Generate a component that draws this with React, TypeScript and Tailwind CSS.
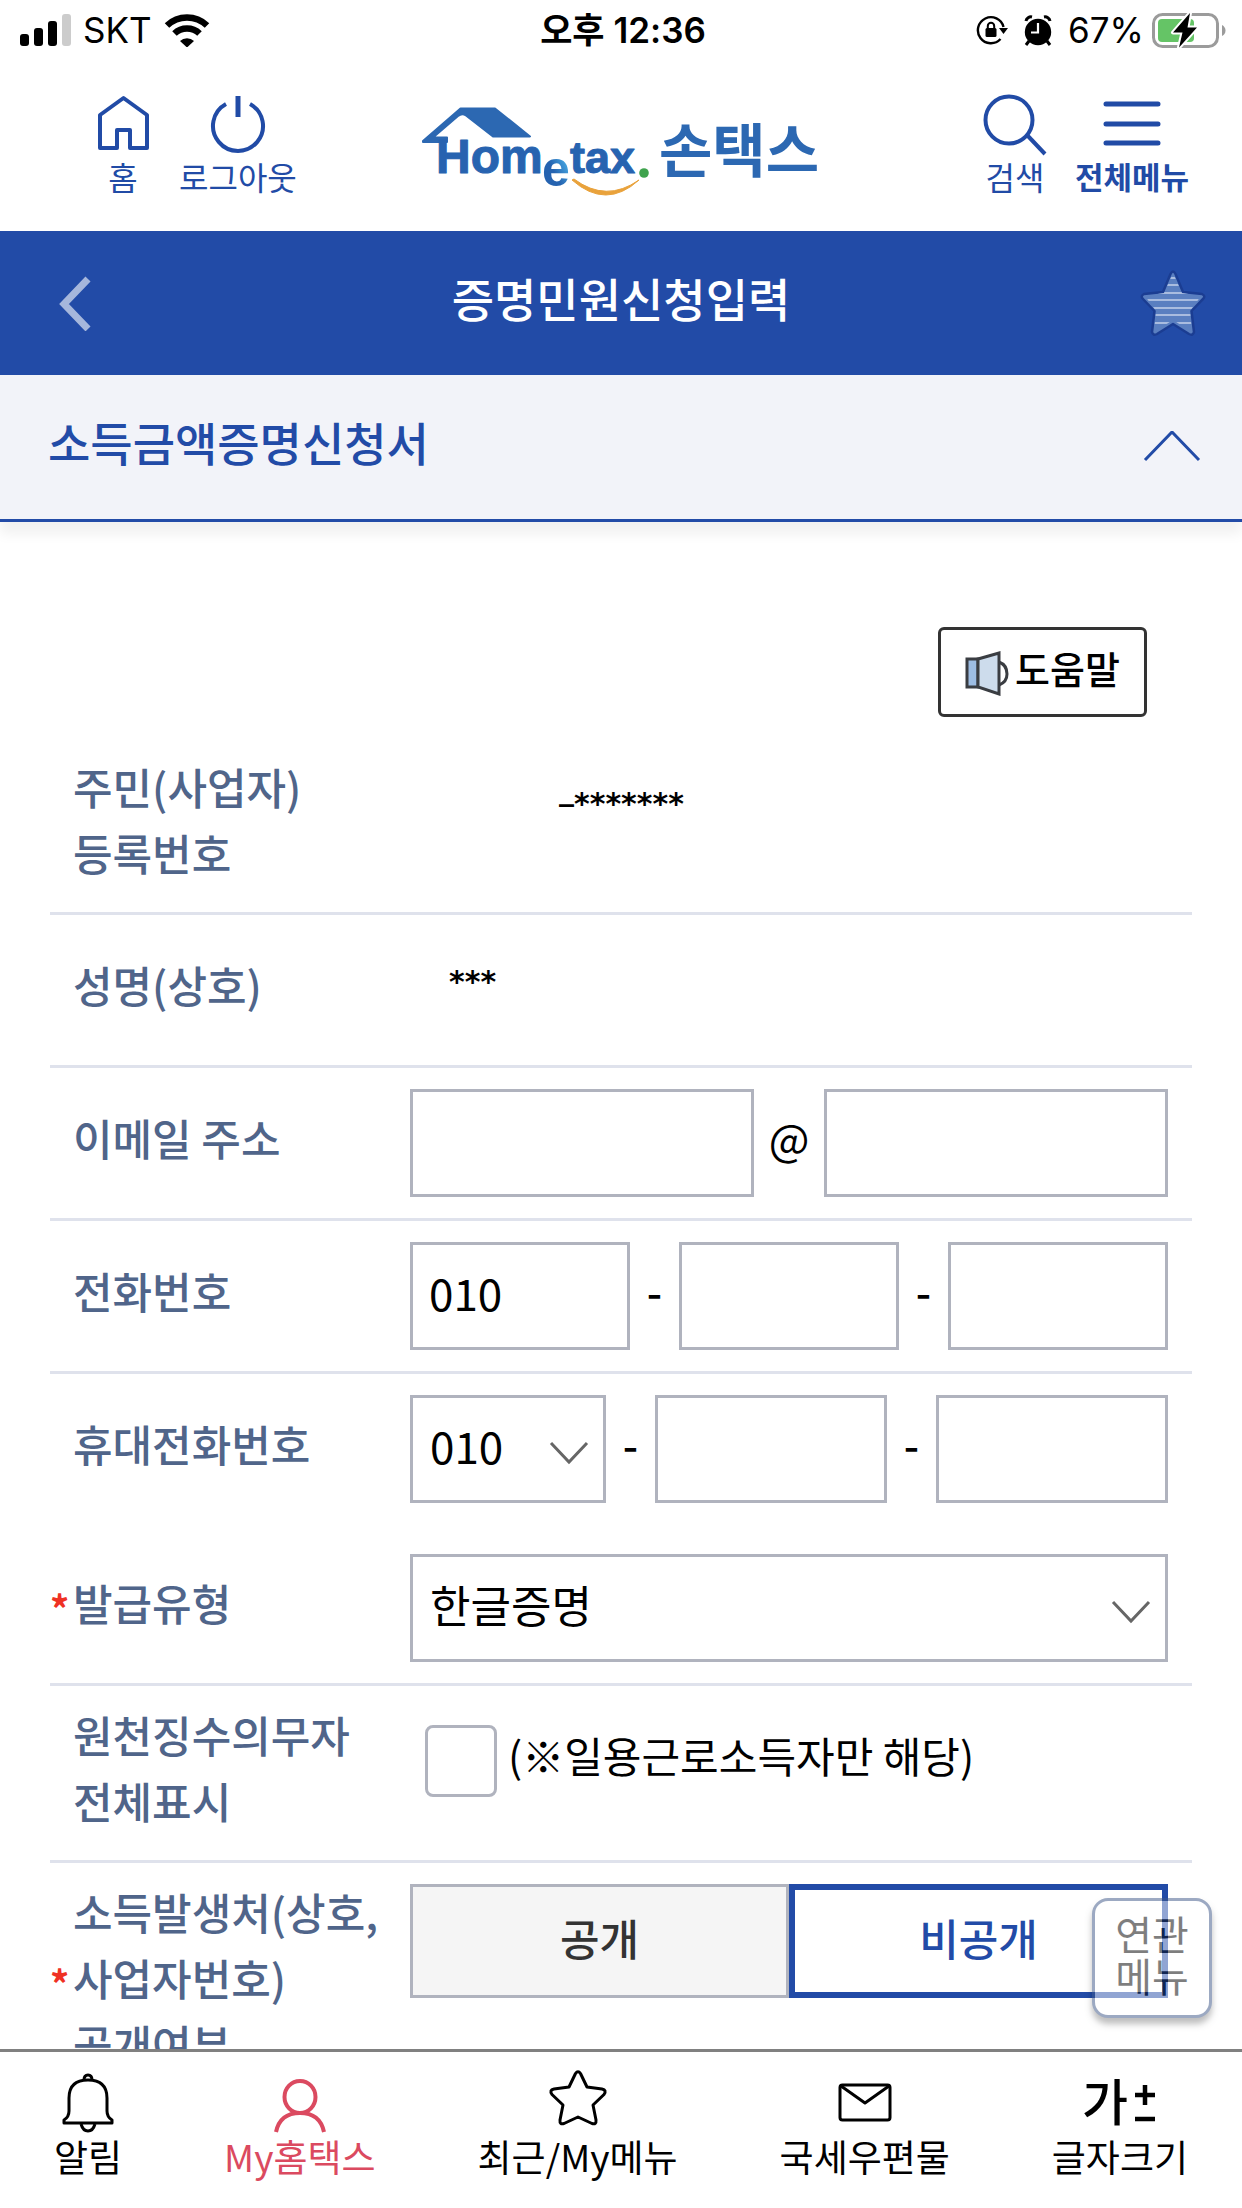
import { useState, type ReactNode } from "react"

const inputClass =
    "h-[108px] min-w-0 flex-1 border-[3px] border-[#b0b3be] bg-white px-4 pb-2 text-[44px] text-black outline-none"

function StatusBar() {
    return (
        <div className="grid h-[60px] shrink-0 grid-cols-[1fr_auto_1fr] items-center pr-4 pl-5 font-['Inter','Noto_Sans_CJK_KR',sans-serif] text-[35px] leading-[40px] text-black">
            <div className="flex items-center gap-3">
                <svg className="h-8 w-[51px]" viewBox="0 0 51 32" aria-hidden="true">
                    <rect x="0" y="20" width="9" height="12" rx="3" />
                    <rect x="14" y="14" width="9" height="18" rx="3" />
                    <rect x="28" y="7" width="9" height="25" rx="3" />
                    <rect x="42" y="0" width="9" height="32" rx="3" fill="#ccc" />
                </svg>
                <span>SKT</span>
                <svg className="h-[33px] w-[46px]" viewBox="0 0 46 33" aria-hidden="true">
                    <path d="M3 11.500A29 29 0 0 1 43 11.500" fill="none" stroke="#000" strokeWidth="6.500" />
                    <path d="M10.500 19.500A18 18 0 0 1 35.500 19.500" fill="none" stroke="#000" strokeWidth="6.500" />
                    <path d="M16 27A10 10 0 0 1 30 27L23 33.500Z" />
                </svg>
            </div>
            <span className="font-semibold">오후 12:36</span>
            <div className="flex items-center justify-end">
                {/* Rotation lock */}
                <svg className="mr-4 h-8 w-8" viewBox="0 0 32 32" aria-hidden="true">
                    <path d="M24.500 25A13 13 0 1 1 27.500 13" fill="none" stroke="#000" strokeWidth="2.400" />
                    <path d="M23 14H32L27.500 20Z" />
                    <rect x="9.500" y="14" width="11" height="9" rx="1.500" />
                    <path d="M11.800 15V12A3.200 3.200 0 0 1 18.200 12V15" fill="none" stroke="#000" strokeWidth="2" />
                </svg>
                {/* Alarm */}
                <svg className="mr-4 h-8 w-7" viewBox="0 0 28 32" aria-hidden="true">
                    <circle cx="14" cy="18" r="13.200" />
                    <path d="M2 7A5 5 0 0 1 8 3M26 7A5 5 0 0 0 20 3" fill="none" stroke="#000" strokeWidth="3" />
                    <path d="M5 27L2 31M23 27L26 31" stroke="#000" strokeWidth="3" />
                    <path d="M14 9V18.500H7" fill="none" stroke="#fff" strokeWidth="2.200" />
                </svg>
                <span className="mr-2">67%</span>
                <svg className="h-9 w-[74px]" viewBox="0 0 74 36" aria-hidden="true">
                    <rect x="1.500" y="2.500" width="64" height="32" rx="9" fill="none" stroke="#9b9b9b" strokeWidth="3" />
                    <path d="M70 13Q73.500 15 73.500 18.500Q73.500 22 70 24Z" fill="#9b9b9b" />
                    <rect x="6" y="7" width="36" height="23" rx="4" fill="#65c466" />
                    <path
                        d="M38 1L21 20.500H30.500L27 35.500L45 15.500H35.500Z"
                        stroke="#fff"
                        strokeWidth="4"
                        strokeLinejoin="round"
                        paintOrder="stroke"
                    />
                </svg>
            </div>
        </div>
    )
}

function Logo() {
    return (
        <svg className="h-[92px] w-[400px]" viewBox="0 0 400 92" role="img" aria-label="Hometax 손택스">
            <defs>
                <linearGradient id="logo-e" x1="1" y1="0" x2="0.200" y2="0.800">
                    <stop offset="0.200" stopColor="#4fb8ee" />
                    <stop offset="0.700" stopColor="#2563b0" />
                </linearGradient>
            </defs>
            <path
                d="M2 35L39.500 2.500H74L109 30.500H72L45 9.500Q41 6.500 37 10L12 31.500H26V36H2Z"
                fill="#2c68b2"
                stroke="#2c68b2"
                strokeWidth="2"
                strokeLinejoin="round"
            />
            <g fill="#2763b0" stroke="#2763b0" strokeLinejoin="round" className="font-['Liberation_Sans',sans-serif] font-bold">
                <text x="15" y="67" fontSize="48" strokeWidth="1">Hom</text>
                <text x="149" y="67" fontSize="45" strokeWidth="1">tax</text>
            </g>
            <text x="121" y="80" fontSize="50" fill="url(#logo-e)" className="font-['Liberation_Sans',sans-serif] font-bold">e</text>
            <circle cx="223" cy="67" r="4.800" fill="#3fa34d" />
            <path d="M151 74Q185 104 218 74Q185 97 153 73Z" fill="#e9a23b" stroke="#e9a23b" strokeWidth="1" />
            <text x="238" y="66" fontSize="58" fill="#2c68b2" className="font-['Noto_Sans_CJK_KR',sans-serif] font-bold">손택스</text>
        </svg>
    )
}

interface IconButtonProps {
    label: string
    bold?: boolean
    children: ReactNode
}

function HeaderButton({ label, bold, children }: IconButtonProps) {
    return (
        <button type="button" className="flex flex-col items-center text-[#214ba6]">
            <svg
                className="h-16 w-16"
                viewBox="0 0 64 64"
                fill="none"
                stroke="currentColor"
                strokeWidth="4"
                strokeLinejoin="round"
                aria-hidden="true"
            >
                {children}
            </svg>
            <span className={bold ? "text-[31px] leading-9 font-bold" : "text-[32px] leading-9"}>{label}</span>
        </button>
    )
}

function Header() {
    return (
        <header className="grid h-[171px] shrink-0 grid-cols-[1fr_auto_1fr] items-start px-[53px] pt-[34px]">
            <div className="flex gap-6 pl-[38px]">
                <HeaderButton label="홈">
                    <path d="M9 21L32.500 4L56 21V54H39V36H26V54H9Z" />
                </HeaderButton>
                <HeaderButton label="로그아웃">
                    <path d="M20 10A25 25 0 1 0 44 10" />
                    <path d="M32 2V23" strokeWidth="5" />
                </HeaderButton>
            </div>
            <div className="pt-3">
                <Logo />
            </div>
            <div className="flex justify-end gap-7">
                <HeaderButton label="검색">
                    <circle cx="26" cy="26" r="23.500" />
                    <path d="M44 41L62 60" />
                </HeaderButton>
                <HeaderButton label="전체메뉴" bold>
                    <path d="M6 10H58M6 30H58M6 49H58" strokeWidth="5" strokeLinecap="round" />
                </HeaderButton>
            </div>
        </header>
    )
}

function TitleBar() {
    return (
        <div className="flex h-36 shrink-0 items-center justify-between bg-[#224ba7] pr-[35px] pl-[57px]">
            <button type="button" aria-label="이전" className="w-[46px]">
                <svg className="h-14 w-9" viewBox="0 0 36 56" fill="none" stroke="#a6b7dc" strokeWidth="7" aria-hidden="true">
                    <path d="M31 4L7 29L31 54" />
                </svg>
            </button>
            <h1 className="pb-3 text-[46px] leading-[66px] font-medium text-white">증명민원신청입력</h1>
            <button type="button" aria-label="즐겨찾기">
                <svg className="h-[70px] w-[68px]" viewBox="0 0 68 70" aria-hidden="true">
                    <defs>
                        <clipPath id="fav-star">
                            <path d="M34 5L43 25L62 28L51 43L53 64L34 52L15 64L17 43L6 28L25 25Z" />
                        </clipPath>
                    </defs>
                    <path
                        d="M31.500 6Q34 1 36.500 6L44 24L63 26Q67 28 64 31L52.500 43L55 64Q54 68 50 66L34 56L18 66Q14 68 13 64L15.500 43L4 31Q1 28 5 26L24 24Z"
                        fill="#5a7fc0"
                        stroke="#1b3d92"
                        strokeWidth="2.500"
                        strokeLinejoin="round"
                    />
                    <path
                        d="M4 10H64M4 17H64M4 25H64M4 32H64M4 40H64M4 47H64M4 55H64"
                        stroke="#a9bcdf"
                        strokeWidth="1.800"
                        clipPath="url(#fav-star)"
                    />
                </svg>
            </button>
        </div>
    )
}

interface FieldRowProps {
    label: ReactNode
    htmlFor?: string
    required?: boolean
    className?: string
    children: ReactNode
}

function FieldRow({ label, htmlFor, required, className = "border-b-[3px]", children }: FieldRowProps) {
    return (
        <div className={`grid grid-cols-[360px_minmax(0,1fr)] items-center border-[#dfe2ec] py-[21px] pr-6 ${className}`}>
            <div className="-mt-1.5 mb-1.5 flex items-center text-[43px] leading-[66px] font-medium text-[#50658a]">
                <span className="w-[23px] shrink-0 pt-3 text-[38px] font-bold text-[#ef3124]">{required ? "*" : ""}</span>
                <label htmlFor={htmlFor} className="whitespace-nowrap">{label}</label>
            </div>
            {children}
        </div>
    )
}

function SelectBox({ id, options, className }: { id: string; options: string[]; className: string }) {
    return (
        <div className={`relative ${className}`}>
            <select
                id={id}
                className="h-[108px] w-full appearance-none border-[3px] border-[#b0b3be] bg-white px-[17px] pb-2 text-[44px] text-black"
            >
                {options.map((option) => (
                    <option key={option}>{option}</option>
                ))}
            </select>
            <svg
                className="pointer-events-none absolute top-[46px] right-[17px] h-6 w-10"
                viewBox="0 0 40 24"
                fill="none"
                stroke="#666"
                strokeWidth="3"
                aria-hidden="true"
            >
                <path d="M2 2L20 21L38 2" />
            </svg>
        </div>
    )
}

function Dash() {
    return <span className="w-[49px] shrink-0 pb-3 text-center text-[43px] leading-[66px] font-medium">-</span>
}

function RequestForm() {
    const [open, setOpen] = useState(false)

    return (
        <form className="mx-[50px]">
            <div className="flex justify-end pt-[105px] pr-[45px]">
                <button
                    type="button"
                    className="flex h-[90px] items-center gap-1.5 rounded-md border-[3px] border-[#333] px-6 text-[38px] leading-[66px] font-medium text-black"
                >
                    <svg className="h-12 w-[44px]" viewBox="0 0 44 48" stroke="#3a3d42" strokeWidth="3" aria-hidden="true">
                        <path d="M34 14Q42 17 42 26Q42 34 34 37" fill="none" />
                        <path d="M2 11H13V39H2Z" fill="#9dbde3" />
                        <path d="M13 11L34 5V46L13 39Z" fill="#cddcec" />
                    </svg>
                    <span className="pb-2">도움말</span>
                </button>
            </div>

            <div className="pt-[21px]">
                <FieldRow label={<>주민(사업자)<br />등록번호</>}>
                    <div className="flex items-start self-start pt-3 pl-[149px] font-['DejaVu_Sans',sans-serif] text-[30px] font-bold text-black">
                        <span className="leading-[38px]">_</span>
                        <span className="leading-[66px]">*******</span>
                    </div>
                </FieldRow>
                <FieldRow label="성명(상호)" className="min-h-[153px] border-b-[3px]">
                    <span className="pb-4 pl-[39px] font-['DejaVu_Sans',sans-serif] text-[30px] leading-[66px] font-bold text-black">
                        ***
                    </span>
                </FieldRow>
                <FieldRow label="이메일 주소" htmlFor="email">
                    <div className="flex items-center">
                        <input id="email" className={inputClass} />
                        <span className="w-[70px] shrink-0 pb-3 text-center text-[43px] leading-[66px]">@</span>
                        <input aria-label="이메일 도메인" className={inputClass} />
                    </div>
                </FieldRow>
                <FieldRow label="전화번호" htmlFor="phone">
                    <div className="flex items-center">
                        <input id="phone" defaultValue="010" className={inputClass} />
                        <Dash />
                        <input aria-label="전화번호 가운데 자리" className={inputClass} />
                        <Dash />
                        <input aria-label="전화번호 끝자리" className={inputClass} />
                    </div>
                </FieldRow>
                <FieldRow label="휴대전화번호" htmlFor="mobile" className="mb-[9px]">
                    <div className="flex items-center">
                        <SelectBox id="mobile" options={["010", "011", "016"]} className="w-[196px] shrink-0" />
                        <Dash />
                        <input aria-label="휴대전화번호 가운데 자리" className={inputClass} />
                        <Dash />
                        <input aria-label="휴대전화번호 끝자리" className={inputClass} />
                    </div>
                </FieldRow>
                <FieldRow label="발급유형" htmlFor="issue-type" required>
                    <SelectBox id="issue-type" options={["한글증명", "영문증명"]} className="w-full" />
                </FieldRow>
                <FieldRow label={<>원천징수의무자<br />전체표시</>} htmlFor="withholding">
                    <div className="flex items-center gap-[11px] self-start pt-[18px] pl-[15px]">
                        <input
                            id="withholding"
                            type="checkbox"
                            className="size-[72px] shrink-0 appearance-none rounded-lg border-[3px] border-[#b0b3be] bg-white checked:bg-[#224ba7]"
                        />
                        <label htmlFor="withholding" className="-mt-3 text-[42px] leading-[66px] whitespace-nowrap text-black">
                            (※일용근로소득자만 해당)
                        </label>
                    </div>
                </FieldRow>
                <FieldRow label={<>소득발생처(상호,<br />사업자번호)<br />공개여부</>} required>
                    <div className="grid h-[114px] grid-cols-2 self-start text-[43px] leading-[66px] font-medium">
                        {[true, false].map((value) => (
                            <button
                                key={String(value)}
                                type="button"
                                aria-pressed={open === value}
                                onClick={() => setOpen(value)}
                                className={
                                    open === value
                                        ? "border-[6px] border-[#224ba7] bg-white pb-2 text-[#224ba7]"
                                        : "border-[3px] border-[#b0b3be] bg-[#f5f5f5] pb-2 text-[#333]"
                                }
                            >
                                {value ? "공개" : "비공개"}
                            </button>
                        ))}
                    </div>
                </FieldRow>
            </div>
        </form>
    )
}

function NavItem({ label, active, children }: { label: string; active?: boolean; children: ReactNode }) {
    return (
        <a href="#" className={active ? "flex flex-col items-center text-[#db4a60]" : "flex flex-col items-center text-black"}>
            <svg
                className="h-16 w-16 overflow-visible"
                viewBox="6 0 64 64"
                fill="none"
                stroke="currentColor"
                strokeWidth="3"
                strokeLinejoin="round"
                aria-hidden="true"
            >
                {children}
            </svg>
            <span className="text-[37px] leading-[44px]">{label}</span>
        </a>
    )
}

function BottomNav() {
    return (
        <nav className="flex shrink-0 items-start justify-between border-t-[3px] border-[#808080] bg-white px-[54px] pt-[18px] pb-[30px]">
            <NavItem label="알림">
                <path d="M14 53V50Q19 47 19 41V28Q19 10 38 10Q57 10 57 28V41Q57 47 62 50V53Z" />
                <path d="M34 10Q34 5 38 5Q42 5 42 10M31 54Q33 61 38 61Q43 61 45 54" />
            </NavItem>
            <NavItem label="My홈택스" active>
                <ellipse cx="38" cy="27" rx="15.500" ry="16" strokeWidth="4" />
                <path d="M14 62Q18 43 38 43Q58 43 62 62" strokeWidth="4" />
            </NavItem>
            <NavItem label="최근/My메뉴">
                <path d="M35.500 3.500Q38 0 40.500 3.500L47 17L62 19Q67 20 64 24.500L53 35L56 50Q56.500 55 52 53.500L38 47L24 53.500Q19.500 55 20 50L23 35L12 24.500Q9 20 14 19L29 17Z" />
            </NavItem>
            <NavItem label="국세우편물">
                <rect x="13" y="15" width="50" height="35" rx="2.500" />
                <path d="M14 16L38 33L62 16" />
            </NavItem>
            <NavItem label="글자크기">
                <text x="0" y="51" fontSize="50" fill="currentColor" stroke="none" className="font-medium">가</text>
                <path d="M63 15V35M53 25H73M53 49H73" strokeWidth="4.500" />
            </NavItem>
        </nav>
    )
}

export default function App() {
    return (
        <div className="flex h-screen flex-col overflow-hidden bg-white font-['Noto_Sans_CJK_KR',sans-serif]">
            <StatusBar />
            <Header />
            <TitleBar />
            <main className="relative min-h-0 flex-1 overflow-hidden">
                <button
                    type="button"
                    aria-expanded="true"
                    className="flex h-[147px] w-full items-center justify-between border-b-[3px] border-[#224ba7] bg-[#f2f3f9] pr-10 pl-12 text-[46px] leading-[66px] font-medium text-[#224ba7] shadow-[0_12px_12px_rgba(0,0,0,0.06)]"
                >
                    <span className="pb-3">소득금액증명신청서</span>
                    <svg className="h-8 w-[60px]" viewBox="0 0 60 32" fill="none" stroke="currentColor" strokeWidth="3" aria-hidden="true">
                        <path d="M3 29L30 1L57 29" />
                    </svg>
                </button>
                <RequestForm />
                <button
                    type="button"
                    className="absolute right-[30px] bottom-[31px] size-[120px] rounded-2xl border-[3px] border-[#3c5687] bg-white pb-2 text-[40px] leading-[42px] text-black opacity-50 shadow-[0_6px_6px_rgba(0,0,0,0.5)]"
                >
                    연관
                    <br />
                    메뉴
                </button>
            </main>
            <BottomNav />
        </div>
    )
}
